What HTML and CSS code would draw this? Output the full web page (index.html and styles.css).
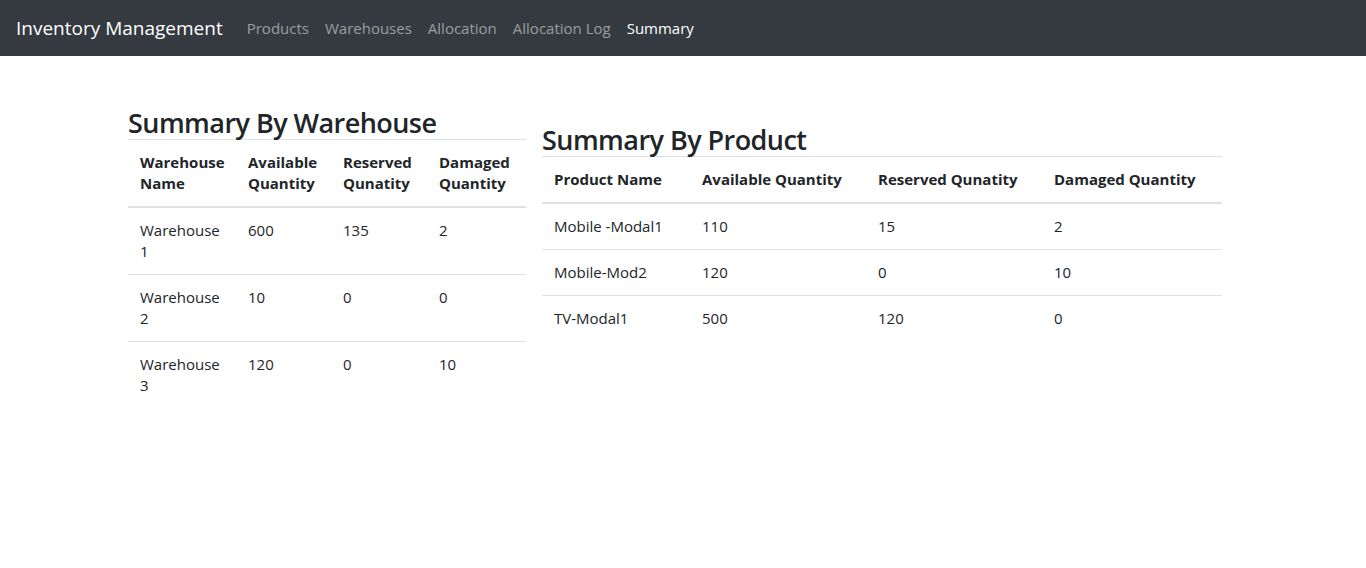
FILE: index.html
```html
<!DOCTYPE html>
<html lang="en">
<head>
<meta charset="utf-8">
<title>Summary - Inventory Management</title>
<link rel="stylesheet" href="styles.css">
</head>
<body>
<nav class="navbar">
  <a class="brand" href="#">Inventory Management</a>
  <ul class="nav">
    <li><a class="nav-link" href="#">Products</a></li>
    <li><a class="nav-link" href="#">Warehouses</a></li>
    <li><a class="nav-link" href="#">Allocation</a></li>
    <li><a class="nav-link" href="#">Allocation Log</a></li>
    <li><a class="nav-link active" href="#">Summary</a></li>
  </ul>
</nav>
<main class="container">
  <section class="panel panel-warehouse">
    <h2 class="title">Summary By Warehouse</h2>
    <table class="table table-warehouse">
      <thead>
        <tr>
          <th class="w1">Warehouse Name</th>
          <th class="w2">Available Quantity</th>
          <th class="w3">Reserved Qunatity</th>
          <th class="w4">Damaged Quantity</th>
        </tr>
      </thead>
      <tbody>
        <tr><td>Warehouse 1</td><td>600</td><td>135</td><td>2</td></tr>
        <tr><td>Warehouse 2</td><td>10</td><td>0</td><td>0</td></tr>
        <tr><td>Warehouse 3</td><td>120</td><td>0</td><td>10</td></tr>
      </tbody>
    </table>
  </section>
  <section class="panel panel-product">
    <h2 class="title">Summary By Product</h2>
    <table class="table table-product">
      <thead>
        <tr>
          <th class="p1">Product Name</th>
          <th class="p2">Available Quantity</th>
          <th class="p3">Reserved Qunatity</th>
          <th class="p4">Damaged Quantity</th>
        </tr>
      </thead>
      <tbody>
        <tr><td>Mobile -Modal1</td><td>110</td><td>15</td><td>2</td></tr>
        <tr><td>Mobile-Mod2</td><td>120</td><td>0</td><td>10</td></tr>
        <tr><td>TV-Modal1</td><td>500</td><td>120</td><td>0</td></tr>
      </tbody>
    </table>
  </section>
</main>
</body>
</html>
```
FILE: styles.css
```css
* { box-sizing: border-box; }
html, body { margin: 0; padding: 0; }
body {
  font-family: "Open Sans", "Noto Sans", sans-serif;
  font-size: 15px;
  line-height: 21px;
  color: #212529;
  background: #fff;
}
a { text-decoration: none; }

.navbar {
  display: flex;
  align-items: center;
  height: 56px;
  padding: 8px 16px;
  background: #343a40;
}
.brand {
  font-size: 19px;
  line-height: 30px;
  padding: 5px 0;
  margin-right: 16px;
  color: #fff;
}
.nav {
  display: flex;
  list-style: none;
  margin: 0;
  padding: 0;
}
.nav-link {
  display: block;
  padding: 8px;
  line-height: 24px;
  font-size: 15px;
  color: rgba(255, 255, 255, 0.5);
}
.nav-link.active { color: #fff; }

.container {
  width: 1140px;
  margin: 0 auto;
  padding: 50px 15px 0;
  display: flex;
  align-items: flex-start;
  gap: 16px;
}
.panel-product { padding-top: 17px; }
.title {
  margin: 0;
  font-size: 27px;
  line-height: 33px;
  font-weight: 600;
  letter-spacing: -0.55px;
}
.table {
  border-collapse: collapse;
  table-layout: fixed;
}
.table-warehouse { width: 398px; }
.table-product { width: 680px; }
.table th, .table td {
  padding: 12px;
  text-align: left;
  vertical-align: top;
  border-top: 1px solid #dee2e6;
}
.table th {
  font-weight: 700;
  vertical-align: bottom;
  border-bottom: 2px solid #dee2e6;
}
.w1 { width: 108px; }
.w2 { width: 95px; }
.w3 { width: 96px; }
.w4 { width: 99px; }
.p1 { width: 148px; }
.p2 { width: 176px; }
.p3 { width: 176px; }
.p4 { width: 180px; }
```
